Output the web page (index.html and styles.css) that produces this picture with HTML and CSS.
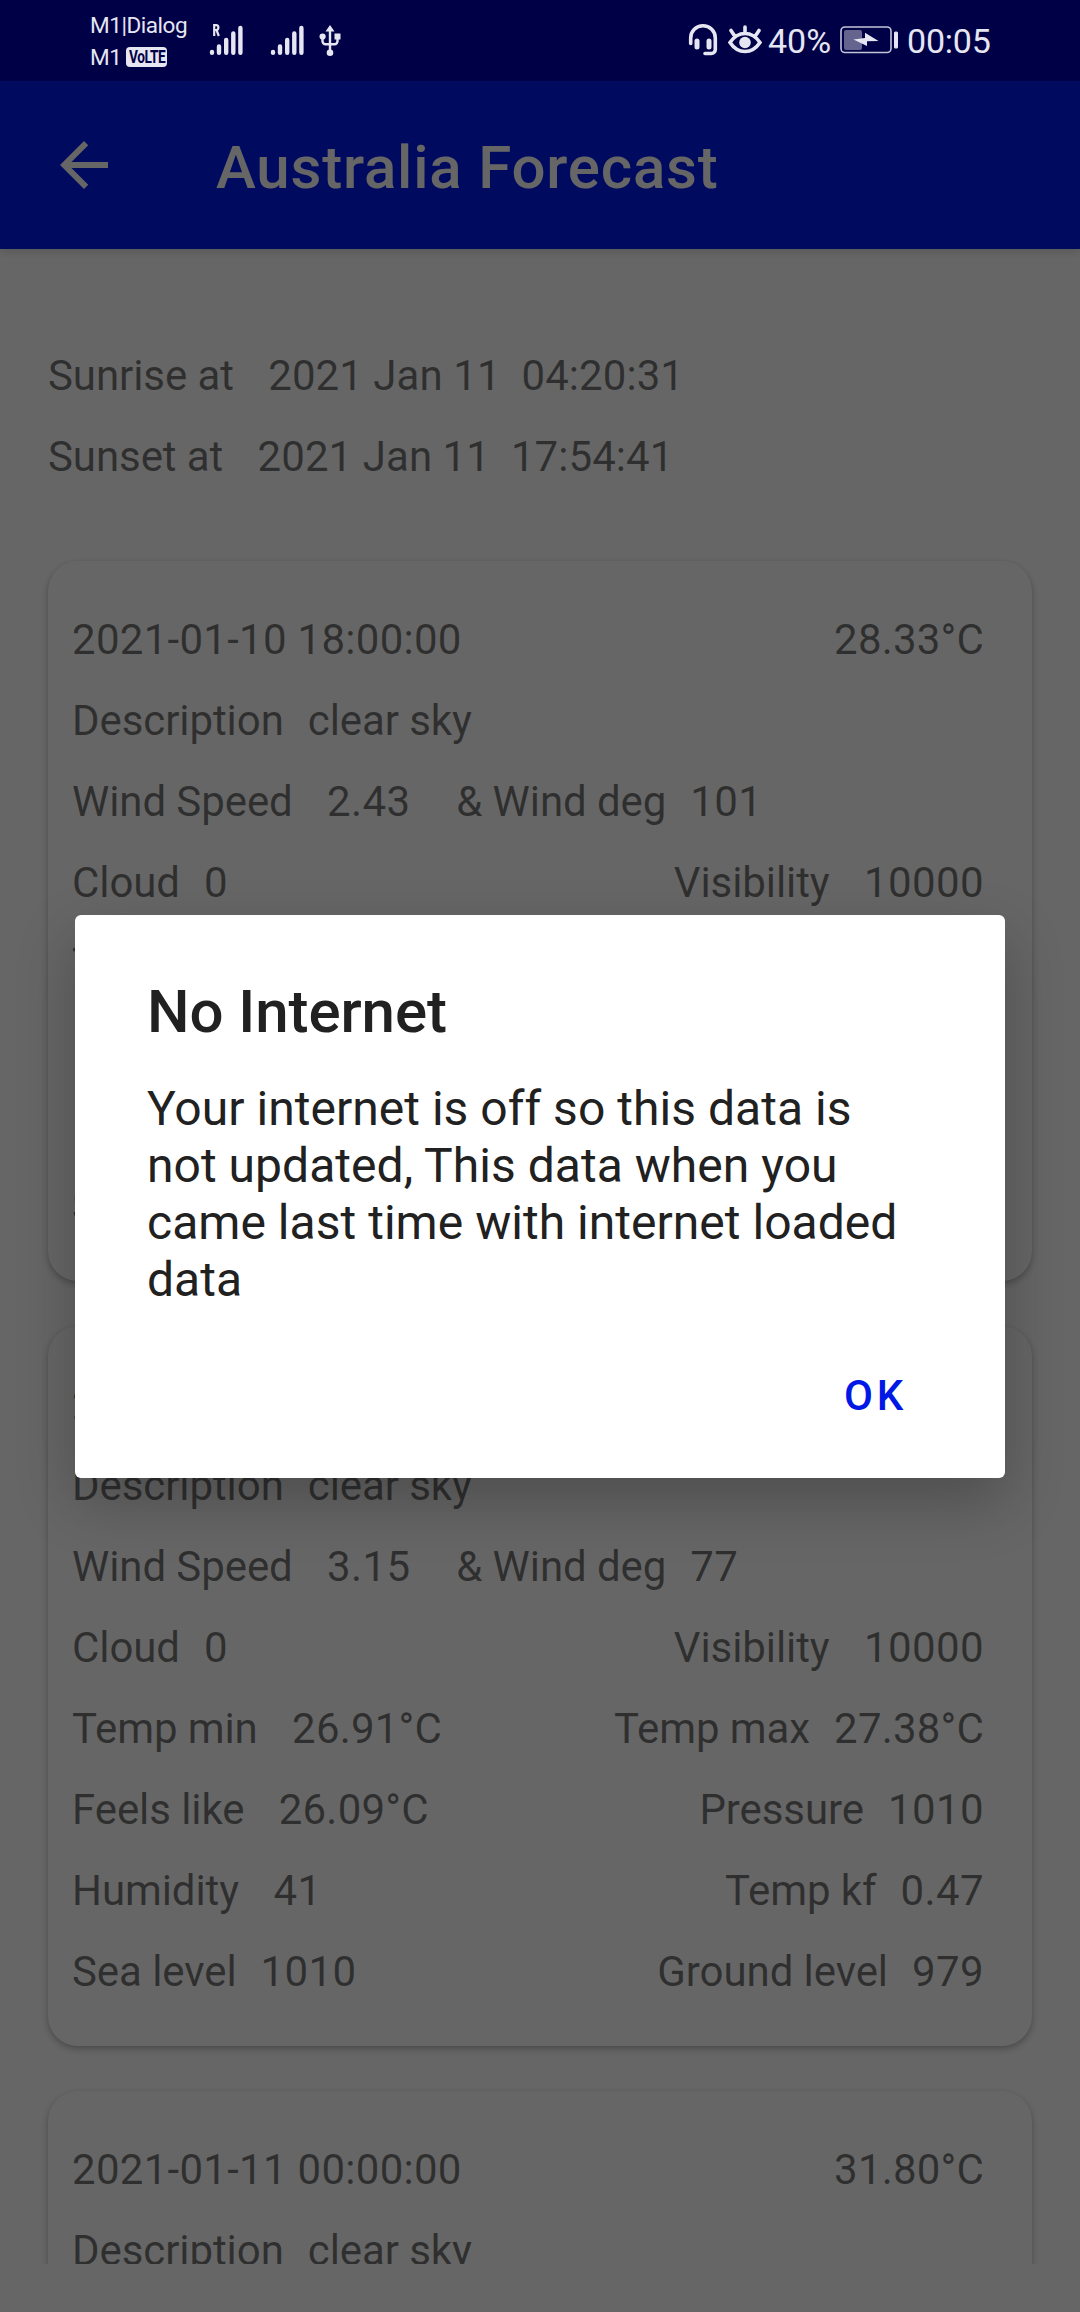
FILE: index.html
```html
<!DOCTYPE html>
<html lang="en">
<head>
<meta charset="utf-8">
<title>Australia Forecast</title>
<link rel="stylesheet" href="styles.css">
</head>
<body>
<div class="screen">
  <header class="status">
    <div class="carriers">
      <span>M1|Dialog</span>
      <span class="carrier-row">M1 <b class="volte"><span>VoLTE</span></b></span>
    </div>
    <svg class="signal" width="36" height="36" viewBox="0 0 36 36">
      <path d="M4 30v.7M11 24.500v6.200M18.200 18v12.700M25.300 11.500v19.200M32.400 6v24.700"/>
      <path class="roaming" d="M6.200 14V3.200h2a2.200 2.400 0 0 1 0 4.800h-2M8.500 8l2.300 6"/>
    </svg>
    <svg class="signal signal-second" width="36" height="36" viewBox="0 0 36 36">
      <path d="M4 30v.7M11 24.500v6.200M18.200 18v12.700M25.300 11.500v19.200M32.400 6v24.700"/>
    </svg>
    <svg class="usb" width="22" height="34" viewBox="0 0 22 34">
      <path class="line" d="M11 6v22M3.500 13v4.200a3 3 0 0 0 3 3h9a3 3 0 0 0 3-3V12"/>
      <path class="solid" d="M11 1l4.500 6.500h-9zM15.500 9.500h6v6h-6z"/>
      <circle class="solid" cx="3.600" cy="12.500" r="3.100"/>
      <circle class="solid" cx="11" cy="28.800" r="3.300"/>
    </svg>
    <div class="status-right">
      <svg class="headset" width="30" height="34" viewBox="0 0 30 34">
        <path d="M2.700 20.500V15a12.300 12.300 0 0 1 24.600 0v11.500a4 4 0 0 1-4 4H17"/>
        <path class="pads" d="M9 18v6M21 18v6"/>
      </svg>
      <svg class="eye" width="34" height="32" viewBox="0 0 34 32">
        <path d="M2 18.500C6 12.500 11 9.500 17 9.500s11 3 15 9c-4 6-9 9-15 9s-11-3-15-9zM17 9V3M7 12.500L3 6.500M27 12.500l4-6"/>
        <circle cx="17" cy="18.500" r="5.800"/>
      </svg>
      <span class="percent">40%</span>
      <svg class="battery" width="58" height="28" viewBox="0 0 58 28">
        <rect class="shell" x="1" y="1" width="50" height="25.500" rx="4"/>
        <rect class="charge" x="4" y="4" width="18" height="20" rx="2"/>
        <path class="bolt" d="M13.500 13.500L25 12V6.800L38.500 15 27 15.300V20z"/>
        <rect class="cap" x="54" y="5.500" width="4" height="17" rx="1.500"/>
      </svg>
      <span class="clock">00:05</span>
    </div>
  </header>

  <div class="appbar">
    <svg width="72" height="72" viewBox="0 0 24 24"><path d="M20 11H7.830l5.590-5.590L12 4l-8 8 8 8 1.410-1.410L7.830 13H20v-2z"/></svg>
    <h1>Australia Forecast</h1>
  </div>

  <main class="content">
    <section class="sun">
      <div class="pair"><span>Sunrise at </span><span class="moment">2021 Jan 11  04:20:31</span></div>
      <div class="pair"><span>Sunset at </span><span class="moment">2021 Jan 11  17:54:41</span></div>
    </section>

    <article class="card">
      <div class="row"><span class="date">2021-01-10 18:00:00</span><span class="temp">28.33°C</span></div>
      <div class="pair"><span>Description</span><span>clear sky</span></div>
      <div class="pair"><span>Wind Speed </span><span class="num">2.43  </span><span>&amp; Wind deg</span><span class="num">101</span></div>
      <div class="row"><div class="pair"><span>Cloud</span><span class="num">0</span></div><div class="pair"><span>Visibility </span><span class="num">10000</span></div></div>
      <div class="row"><div class="pair"><span>Temp min </span><span class="temp">28.33°C</span></div><div class="pair"><span>Temp max</span><span class="temp">28.33°C</span></div></div>
      <div class="row"><div class="pair"><span>Feels like </span><span class="temp">28.33°C</span></div><div class="pair"><span>Pressure</span><span class="num">1010</span></div></div>
      <div class="row"><div class="pair"><span>Humidity </span><span class="num">41</span></div><div class="pair"><span>Temp kf</span><span class="num">0.47</span></div></div>
      <div class="row"><div class="pair"><span>Sea level</span><span class="num">1010</span></div><div class="pair"><span>Ground level</span><span class="num">979</span></div></div>
    </article>

    <article class="card">
      <div class="row"><span class="date">2021-01-10 21:00:00</span><span class="temp">27.38°C</span></div>
      <div class="pair"><span>Description</span><span>clear sky</span></div>
      <div class="pair"><span>Wind Speed </span><span class="num">3.15  </span><span>&amp; Wind deg</span><span class="num">77</span></div>
      <div class="row"><div class="pair"><span>Cloud</span><span class="num">0</span></div><div class="pair"><span>Visibility </span><span class="num">10000</span></div></div>
      <div class="row"><div class="pair"><span>Temp min </span><span class="temp">26.91°C</span></div><div class="pair"><span>Temp max</span><span class="temp">27.38°C</span></div></div>
      <div class="row"><div class="pair"><span>Feels like </span><span class="temp">26.09°C</span></div><div class="pair"><span>Pressure</span><span class="num">1010</span></div></div>
      <div class="row"><div class="pair"><span>Humidity </span><span class="num">41</span></div><div class="pair"><span>Temp kf</span><span class="num">0.47</span></div></div>
      <div class="row"><div class="pair"><span>Sea level</span><span class="num">1010</span></div><div class="pair"><span>Ground level</span><span class="num">979</span></div></div>
    </article>

    <article class="card">
      <div class="row"><span class="date">2021-01-11 00:00:00</span><span class="temp">31.80°C</span></div>
      <div class="pair"><span>Description</span><span>clear sky</span></div>
    </article>
  </main>

  <div class="scrim">
    <div class="dialog" role="alertdialog">
      <h2>No Internet</h2>
      <p>Your internet is off so this data is<br>not updated, This data when you<br>came last time with internet loaded<br>data</p>
      <button class="ok">OK</button>
    </div>
  </div>
</div>
</body>
</html>
```
FILE: styles.css
```css
* { box-sizing: border-box; }

body {
  margin: 0;
  background: #fff;
  font-family: Roboto, "Liberation Sans", sans-serif;
}

.screen {
  position: relative;
  display: flex;
  flex-direction: column;
  width: 1080px;
  height: 2312px;
  overflow: hidden;
}

/* Status bar sits above the scrim */
.status {
  position: relative;
  z-index: 3;
  display: flex;
  align-items: flex-start;
  flex: none;
  height: 81px;
  padding-left: 90px;
  background: #000046;
  color: #e6e6f2;
}

.carriers {
  display: flex;
  flex-direction: column;
  width: 118px;
  padding-top: 9px;
  font-size: 22.5px;
  line-height: 32px;
  letter-spacing: -0.45px;
  white-space: nowrap;
}

.carrier-row { display: flex; align-items: center; gap: 5px; }

.volte {
  display: flex;
  justify-content: center;
  width: 41px;
  height: 20px;
  border-radius: 4px;
  background: #e6e6f2;
  color: #000046;
  font: 700 19px/20px Roboto, sans-serif;
  letter-spacing: -0.6px;
}
.volte span { transform: scaleX(.72); }

.status svg { flex: none; display: block; }
.signal { margin-top: 22px; fill: none; stroke: #e6e6f2; stroke-width: 4.4; stroke-linecap: round; }
.signal .roaming { stroke-width: 2.2; stroke-linecap: butt; }
.signal-second { margin-left: 25px; }
.usb { margin: 24px 0 0 14px; }
.usb .line { fill: none; stroke: #e6e6f2; stroke-width: 2.4; }
.usb .solid { fill: #e6e6f2; }

.status-right { display: flex; flex: none; margin-left: auto; width: 392px; }
.headset { margin-top: 23px; fill: none; stroke: #e6e6f2; stroke-width: 3.6; stroke-linecap: round; }
.headset .pads { stroke-width: 5; }
.eye { margin: 24px 0 0 10px; fill: none; stroke: #e6e6f2; stroke-width: 3.6; stroke-linecap: round; }
.eye circle { fill: #e6e6f2; stroke: none; }
.percent, .clock { font-size: 34px; line-height: 40px; padding-top: 21px; }
.percent { width: 63px; margin-left: 6px; white-space: nowrap; }
.battery { margin: 26px 0 0 9px; }
.battery .shell { fill: none; stroke: #c4c4d8; stroke-width: 1.6; }
.battery .charge { fill: #64648f; }
.battery .bolt, .battery .cap { fill: #e6e6f2; }
.clock { margin-left: 9px; letter-spacing: -.2px; }

.appbar {
  position: relative;
  z-index: 1;
  display: flex;
  align-items: center;
  gap: 96px;
  flex: none;
  height: 168px;
  padding-left: 48px;
  background: #001aec;
  color: #fff;
  box-shadow: 0 3px 9px rgba(0, 0, 0, .14);
}
.appbar svg { fill: #fff; }
.appbar h1 { margin: 0; font-size: 60px; font-weight: 500; line-height: 70px; letter-spacing: .82px; padding-top: 6px; }

.content {
  display: flex;
  flex-direction: column;
  gap: 45px;
  height: 2015px;
  padding: 86px 48px 0;
  overflow: hidden;
  color: rgba(0, 0, 0, .54);
  font-size: 42px;
  line-height: 81px;
  letter-spacing: -.08px;
}
.content span { white-space: pre; }
.content .num { letter-spacing: .4px; }
.content .date { letter-spacing: .28px; }
.content .temp { letter-spacing: .2px; }
.content .moment { letter-spacing: .06px; }

.sun { flex: none; margin-bottom: 19px; }

.card {
  display: flex;
  flex-direction: column;
  flex: none;
  height: 720px;
  padding: 38px 48px 0 24px;
  border-radius: 30px;
  background: #fff;
  box-shadow: 0 3px 7px rgba(0, 0, 0, .27), 0 0 2px rgba(0, 0, 0, .06);
}

.row { display: flex; justify-content: space-between; }
.pair { display: flex; gap: 24px; }

.scrim {
  position: absolute;
  inset: 81px 0 0;
  z-index: 2;
  display: flex;
  align-items: flex-start;
  justify-content: center;
  padding-top: 834px;
  background: rgba(0, 0, 0, .6);
}

.dialog {
  display: flex;
  flex-direction: column;
  width: 930px;
  height: 563px;
  padding: 62px 72px 0;
  border-radius: 6px;
  background: #fff;
  color: #212121;
  box-shadow: 0 24px 60px rgba(0, 0, 0, .24);
}
.dialog h2 { margin: 0; font-size: 60px; font-weight: 500; line-height: 70px; letter-spacing: -.08px; }
.dialog p { margin: 33px 0 0; font-size: 48px; line-height: 57px; letter-spacing: .03px; white-space: nowrap; }
.ok {
  align-self: flex-end;
  margin: 63px 26px 0 0;
  padding: 0;
  border: 0;
  background: none;
  color: #0018e6;
  font: 500 42px/50px Roboto, sans-serif;
  letter-spacing: 3.75px;
}
```
